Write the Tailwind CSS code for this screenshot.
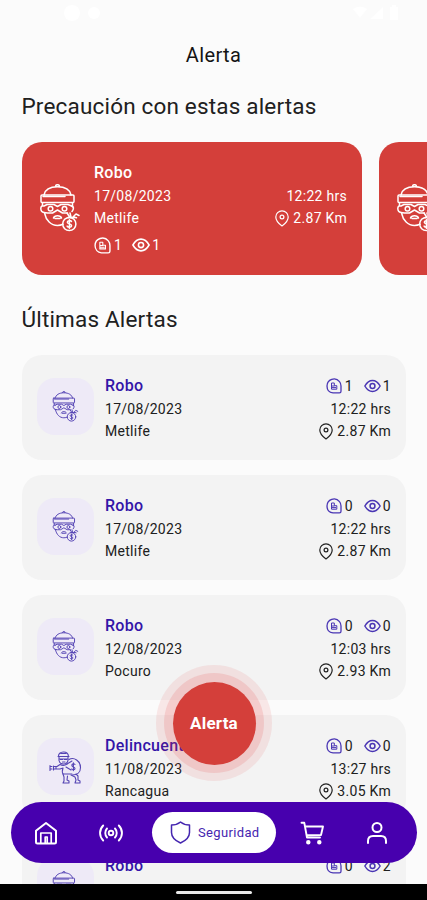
<!DOCTYPE html>
<html lang="es">
<head>
<meta charset="utf-8">
<meta name="viewport" content="width=device-width, initial-scale=1">
<title>Alerta</title>
<script src="https://cdn.jsdelivr.net/npm/@tailwindcss/browser@4"></script>
</head>
<body class="bg-[#fbfbfb]">
<svg class="hidden" fill="none" stroke="currentColor">
  <symbol id="thief" viewBox="0 0 40 48" fill="none" stroke="currentColor" stroke-width="1.5" stroke-linecap="round" stroke-linejoin="round">
    <path d="M4 11C5 6 10 2.800 17.500 2.800S30 6 31 11M15.500 2.500a2 1.800 0 0 1 4 0"/>
    <rect x="1" y="11" width="33" height="7.500" rx="1"/>
    <path d="M3 12.500h22"/>
    <path d="M2.500 19v3M32.500 19v4M4 22C0 20 -.5 28 4 28.500M4 22l3-1.500h7l3.500 2 3.500-2h7l3.500 1.500M4 28.500l3.500.5h5l5-3 5 3h5M4.500 29C6 36.500 11 41.500 17.500 41.500c2 0 4-.5 5.500-1.200M13.500 34c1-3 7-3 8 0M15 34.500h5"/>
    <circle cx="10.500" cy="24.800" r="2.300"/><circle cx="24.500" cy="24.800" r="2.300"/>
    <path d="M31.500 22c2.500 0 2.500 3 .5 5.500M27 29l3 4.500M30 29l1 4M33 33l3-3 3 1.500M33.500 33l3 .8M28 33.500h6"/>
    <circle cx="29.300" cy="40" r="6.600"/>
    <path d="M31.500 37.500c-1-1.500-4.200-1-4.200.7 0 2 4.300 1.500 4.300 3.600 0 1.800-3.500 2-4.500.3M29.400 35.700v8.500"/>
  </symbol>
  <symbol id="robber" viewBox="0 0 34 34" fill="none" stroke="currentColor" stroke-width="1.1" stroke-linecap="round" stroke-linejoin="round">
    <path d="M9.500 6.500C9 1 19 0 19.500 6.500M9 6.500h11M10 7v3.500c1 4.500 7.500 5 9 0V7M10 9h9M11.500 9.500h2M15.500 9.500h2M12 3.500h5M13.500 12h2.500"/>
    <path d="M11 14.500l-3 2H4.500M4.500 19H11l3-1M1 15.500v5M4.500 16v4M1 16.500h2M1 19h2M7 17v2M11 14.500c2 1 5 1 7-.5M14 18c-1 3-1 4.500 0 6h9"/>
    <path d="M20 9.500c5-3 11.500 1.500 11.500 8 0 5-3.500 7.500-8 7.500M18 14l5-3M17 17l5 3"/>
    <path d="M26 14.500c-1-1.200-3.200-.8-3.200.8 0 1.800 3.200 1.500 3.200 3.200 0 1.500-2.500 1.800-3.400.5M24.400 12.800v7.800"/>
    <path d="M14 24l1 3 0 4-1 2h6v-2l-2-1 .5-4M22 25l4 2 1 3-1 3h5v-2l-2-1V26l-2-2"/>
  </symbol>
  <symbol id="note" viewBox="0 0 16 16" fill="none" stroke="currentColor" stroke-width="1.300" stroke-linejoin="round">
    <path d="M15 8v5.300a1.600 1.600 0 0 1-1.600 1.600H7C3.500 14.500 1 11.800 1 8a7 7 0 0 1 12.500-4.300c1 1.200 1.500 2.700 1.500 4.300z"/>
    <path d="M5.500 11.200V5h2.800v2.700h2.500v3.500zM6 8h2.500M6 9.600h4" stroke-width="1"/>
  </symbol>
  <symbol id="eye" viewBox="0 0 16 14" fill="none" stroke="currentColor" stroke-width="1.400" stroke-linejoin="round">
    <path d="M.8 7C2.800 3.500 5 1.800 8 1.800S13.200 3.500 15.200 7C13.200 10.500 11 12.200 8 12.200S2.800 10.500.8 7z"/><circle cx="8" cy="7" r="2.300"/>
  </symbol>
  <symbol id="pin" viewBox="0 0 14 17" fill="none" stroke="currentColor" stroke-width="1.200" stroke-linejoin="round">
    <path d="M7 16C3.500 13.500.8 10.500.8 7a6.200 6.200 0 0 1 12.400 0C13.200 10.500 10.500 13.500 7 16z"/><circle cx="7" cy="7" r="1.900"/>
  </symbol>
</svg>

<div class="relative h-[900px] w-[427px] overflow-hidden bg-[#fbfbfb] font-['Roboto',sans-serif] text-[14px] leading-[22px] tracking-[0.28px] text-[#202020]">
  <div class="flex h-[26px] items-center justify-between pr-7 pl-[64px] text-white">
    <div class="flex items-center gap-2">
      <span class="size-4 rounded-full bg-white"></span><span class="size-3 rounded-full bg-white"></span>
    </div>
    <svg class="h-4 w-[46px]" viewBox="0 0 46 16" fill="currentColor"><path d="M0 4q7-5 14 0L7 13zM17 14L30 2v12zM37 2h2V0h4v2h2v13h-8z"/></svg>
  </div>

  <h1 class="mt-[15px] text-center text-[20px] leading-7 tracking-[0.4px] text-[#141414]">Alerta</h1>
  <h2 class="mt-[23px] ml-[21.500px] text-[22.500px] leading-7 tracking-[0.180px] text-[#202020]">Precaución con estas alertas</h2>

  <div class="mt-[22px] ml-[22px] flex h-[133px] gap-[17px] text-white">
    <section class="flex w-[340px] shrink-0 rounded-[20px] bg-[#d43f3a] pt-[20px] pr-[15px] pl-[18px]">
      <svg class="mt-[22px] h-12 w-10"><use href="#thief"/></svg>
      <div class="ml-[14px] flex-1">
        <h3 class="text-[16px] font-medium">Robo</h3>
        <p class="mt-px">17/08/2023</p>
        <p>Metlife</p>
        <div class="mt-[5px] flex items-center"><svg class="size-[17px]"><use href="#note"/></svg><span class="ml-[3px]">1</span><svg class="ml-[10px] h-4 w-[18px]"><use href="#eye"/></svg><span class="ml-[2px]">1</span></div>
      </div>
      <div class="pt-[23px] text-right">
        <p>12:22 hrs</p>
        <p class="flex items-center justify-end gap-1"><svg class="h-[17px] w-[14px]"><use href="#pin"/></svg>2.87 Km</p>
      </div>
    </section>
    <section class="flex w-[340px] shrink-0 rounded-[20px] bg-[#d43f3a] pt-[20px] pl-[18px]">
      <svg class="mt-[22px] h-12 w-10"><use href="#thief"/></svg>
    </section>
  </div>

  <h2 class="mt-[30px] ml-[21.500px] text-[22.500px] leading-7 tracking-[0.180px] text-[#202020]">Últimas Alertas</h2>

  <div class="mt-[22px] ml-[22px] flex w-[384px] flex-col gap-[15.100px]">
    <article class="flex h-[105px] shrink-0 rounded-[20px] bg-[#f3f3f3] pt-[20px] pr-[15px] pl-[15px]">
      <div class="mt-[3px] flex size-[57px] items-center justify-center rounded-[18px] bg-[#eeeaf7] text-[#5544b4]"><svg class="h-[31px] w-[27px]"><use href="#thief"/></svg></div>
      <div class="ml-[11px] flex-1"><h3 class="text-[16px] font-medium text-[#3315a8]">Robo</h3><p class="mt-px">17/08/2023</p><p>Metlife</p></div>
      <div class="text-right">
        <div class="flex items-center justify-end"><svg class="size-4 text-[#4a36b4]"><use href="#note"/></svg><span class="ml-[3px]">1</span><svg class="ml-[11px] h-4 w-[17px] text-[#4a36b4]"><use href="#eye"/></svg><span class="ml-[2px]">1</span></div>
        <p class="mt-px">12:22 hrs</p>
        <p class="flex items-center justify-end gap-1"><svg class="h-[17px] w-[14px]"><use href="#pin"/></svg>2.87 Km</p>
      </div>
    </article>
    <article class="flex h-[105px] shrink-0 rounded-[20px] bg-[#f3f3f3] pt-[20px] pr-[15px] pl-[15px]">
      <div class="mt-[3px] flex size-[57px] items-center justify-center rounded-[18px] bg-[#eeeaf7] text-[#5544b4]"><svg class="h-[31px] w-[27px]"><use href="#thief"/></svg></div>
      <div class="ml-[11px] flex-1"><h3 class="text-[16px] font-medium text-[#3315a8]">Robo</h3><p class="mt-px">17/08/2023</p><p>Metlife</p></div>
      <div class="text-right">
        <div class="flex items-center justify-end"><svg class="size-4 text-[#4a36b4]"><use href="#note"/></svg><span class="ml-[3px]">0</span><svg class="ml-[11px] h-4 w-[17px] text-[#4a36b4]"><use href="#eye"/></svg><span class="ml-[2px]">0</span></div>
        <p class="mt-px">12:22 hrs</p>
        <p class="flex items-center justify-end gap-1"><svg class="h-[17px] w-[14px]"><use href="#pin"/></svg>2.87 Km</p>
      </div>
    </article>
    <article class="flex h-[105px] shrink-0 rounded-[20px] bg-[#f3f3f3] pt-[20px] pr-[15px] pl-[15px]">
      <div class="mt-[3px] flex size-[57px] items-center justify-center rounded-[18px] bg-[#eeeaf7] text-[#5544b4]"><svg class="h-[31px] w-[27px]"><use href="#thief"/></svg></div>
      <div class="ml-[11px] flex-1"><h3 class="text-[16px] font-medium text-[#3315a8]">Robo</h3><p class="mt-px">12/08/2023</p><p>Pocuro</p></div>
      <div class="text-right">
        <div class="flex items-center justify-end"><svg class="size-4 text-[#4a36b4]"><use href="#note"/></svg><span class="ml-[3px]">0</span><svg class="ml-[11px] h-4 w-[17px] text-[#4a36b4]"><use href="#eye"/></svg><span class="ml-[2px]">0</span></div>
        <p class="mt-px">12:03 hrs</p>
        <p class="flex items-center justify-end gap-1"><svg class="h-[17px] w-[14px]"><use href="#pin"/></svg>2.93 Km</p>
      </div>
    </article>
    <article class="flex h-[105px] shrink-0 rounded-[20px] bg-[#f3f3f3] pt-[20px] pr-[15px] pl-[15px]">
      <div class="mt-[3px] flex size-[57px] items-center justify-center rounded-[18px] bg-[#eeeaf7] text-[#5544b4]"><svg class="size-[34px]"><use href="#robber"/></svg></div>
      <div class="ml-[11px] flex-1"><h3 class="text-[16px] font-medium text-[#3315a8]">Delincuente</h3><p class="mt-px">11/08/2023</p><p>Rancagua</p></div>
      <div class="text-right">
        <div class="flex items-center justify-end"><svg class="size-4 text-[#4a36b4]"><use href="#note"/></svg><span class="ml-[3px]">0</span><svg class="ml-[11px] h-4 w-[17px] text-[#4a36b4]"><use href="#eye"/></svg><span class="ml-[2px]">0</span></div>
        <p class="mt-px">13:27 hrs</p>
        <p class="flex items-center justify-end gap-1"><svg class="h-[17px] w-[14px]"><use href="#pin"/></svg>3.05 Km</p>
      </div>
    </article>
    <article class="flex h-[105px] shrink-0 rounded-[20px] bg-[#f3f3f3] pt-[20px] pr-[15px] pl-[15px]">
      <div class="mt-[3px] flex size-[57px] items-center justify-center rounded-[18px] bg-[#eeeaf7] text-[#5544b4]"><svg class="h-[31px] w-[27px]"><use href="#thief"/></svg></div>
      <div class="ml-[11px] flex-1"><h3 class="text-[16px] font-medium text-[#3315a8]">Robo</h3></div>
      <div class="text-right">
        <div class="flex items-center justify-end"><svg class="size-4 text-[#4a36b4]"><use href="#note"/></svg><span class="ml-[3px]">0</span><svg class="ml-[11px] h-4 w-[17px] text-[#4a36b4]"><use href="#eye"/></svg><span class="ml-[2px]">2</span></div>
      </div>
    </article>
  </div>

  <button class="absolute top-[665px] left-[156px] flex size-[116px] items-center justify-center rounded-full bg-[#e23b3b]/10">
    <span class="flex size-[100px] items-center justify-center rounded-full bg-[#e23b3b]/15">
      <span class="flex size-[83px] items-center justify-center rounded-full bg-[#d43f3a] text-[17px] font-bold tracking-[0.2px] text-white">Alerta</span>
    </span>
  </button>

  <nav class="absolute top-[802px] left-[11px] flex h-[61px] w-[406px] items-center rounded-full bg-[#4700ae] text-white">
    <svg class="ml-[23px] size-6" viewBox="0 0 24 24" fill="none" stroke="currentColor" stroke-width="2" stroke-linejoin="round"><path d="M2 9.800L12 2l10 7.800V21a1.500 1.500 0 0 1-1.500 1.500h-17A1.500 1.500 0 0 1 2 21z"/><path d="M6.800 22V12h10.400v10M11.200 22v-6h2v6" stroke-width="1.700"/></svg>
    <svg class="ml-[40px] h-5 w-[26px]" viewBox="0 0 26 20" fill="none" stroke="currentColor" stroke-width="1.900" stroke-linecap="round"><circle cx="13" cy="10" r="2.300"/><path d="M9 5.500c-2.300 2.500-2.300 6.500 0 9M17 5.500c2.300 2.500 2.300 6.500 0 9M5.200 2.500c-4.200 4.300-4.200 10.700 0 15M20.800 2.500c4.200 4.300 4.200 10.700 0 15"/></svg>
    <div class="ml-[28px] flex h-[41px] w-[124px] items-center rounded-full bg-white pl-[18px] text-[#4526b0]">
      <svg class="h-[23px] w-[21px]" viewBox="0 0 21 23" fill="none" stroke="currentColor" stroke-width="1.500" stroke-linejoin="round"><path d="M10.500 1C8 3 5 4 1.500 4v7.500c0 5 4.500 8.500 9 10.500 4.500-2 9-5.500 9-10.500V4C16 4 13 3 10.500 1z"/></svg>
      <span class="ml-[7px] text-[13px] tracking-[0.35px]">Seguridad</span>
    </div>
    <svg class="ml-[24px] size-6" viewBox="0 0 24 24" fill="none" stroke="currentColor" stroke-width="1.900" stroke-linecap="round" stroke-linejoin="round"><path d="M1.500 1.800h2.800L7 16.500h13M5 5.500h18l-2 8.500-14 .3"/><circle cx="8.300" cy="21.300" r="1.300" fill="currentColor"/><circle cx="19.300" cy="21.300" r="1.300" fill="currentColor"/></svg>
    <svg class="ml-[41px] size-6" viewBox="0 0 24 24" fill="none" stroke="currentColor" stroke-width="2" stroke-linecap="round" stroke-linejoin="round"><circle cx="12" cy="6.500" r="4.500"/><path d="M3 22v-2c0-3 2-5 5-5h8c3 0 5 2 5 5v2"/></svg>
  </nav>

  <footer class="absolute bottom-0 left-0 flex h-4 w-full justify-center bg-black pt-[7px]"><span class="h-[3px] w-[76px] rounded-full bg-[#e8e8e8]"></span></footer>
</div>
</body>
</html>
